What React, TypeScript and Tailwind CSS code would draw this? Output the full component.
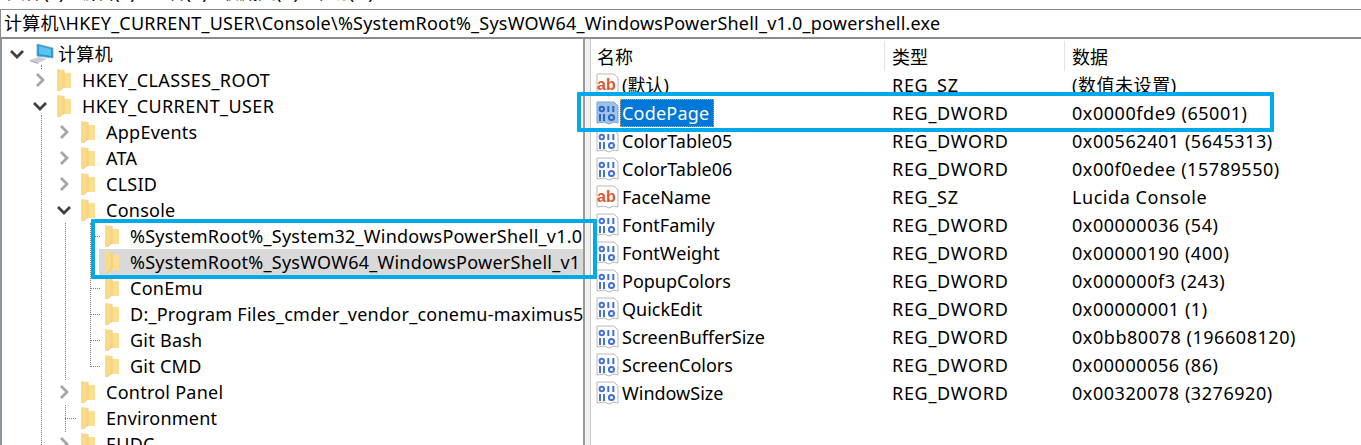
const font = { fontFamily: '"Noto Sans", "Noto Sans CJK SC", sans-serif' };

function Chevron({ open, dark }: { open?: boolean; dark?: boolean }) {
  return (
    <svg width="16" height="16" viewBox="0 0 16 16" fill="none" stroke={dark ? "#404040" : "#a6a6a6"} strokeWidth="2.8">
      {open ? <path d="M2 5l6 6 6-6" /> : <path d="M5 2l6 6-6 6" />}
    </svg>
  );
}

function Folder() {
  return (
    <svg width="16" height="26" viewBox="0 0 16 26" className="shrink-0">
      <path d="M6 6h8v15H6z" fill="#fbdf8e" />
      <path d="M0 2l7 1v17l-5 4H0z" fill="#f8da8a" />
      <path d="M7 3v17l-5 4" fill="none" stroke="#f1c96b" />
    </svg>
  );
}

function Computer() {
  return (
    <svg width="24" height="22" viewBox="0 0 24 22" className="shrink-0">
      <path d="M7 1l16 4v10L7 13z" fill="#1e9ad6" stroke="#8aa4b8" strokeWidth="0.8" />
      <path d="M9 3l12 3v7L9 11z" fill="#5cc3ef" />
      <path d="M0 17l9-3 8 2-9 4z" fill="#c9ced3" />
      <path d="M0 17l8 3v1l-8-3z" fill="#8f979e" />
    </svg>
  );
}

function RegIcon({ type, dim }: { type: "sz" | "dword"; dim?: boolean }) {
  return (
    <svg width="23" height="24" viewBox="0 0 23 24" className="shrink-0">
      <path d="M1 1h17l4 4v17l-4-1-5 2-5-2-7 1z" fill={dim ? "#9dc3ea" : "#fff"} stroke={dim ? "#7aa5d8" : "#b9b9b9"} />
      {type === "sz" ? (
        <text x="1" y="17" fontSize="16" fontWeight="700" fill="#dd5a32" fontFamily="Liberation Sans">ab</text>
      ) : (
        <g fill="none" stroke={dim ? "#2a66c4" : "#4272d8"} strokeWidth="2">
          <circle cx="5.8" cy="8" r="2.2" />
          <path d="M12.3 5v6M17.3 5v6M4 13v7M8 13v7" />
          <circle cx="15.5" cy="16.5" r="2.6" />
        </g>
      )}
    </svg>
  );
}

type TreeRow = { label: string; indent: number; chevron?: "open" | "closed"; selected?: boolean };

const tree: TreeRow[] = [
  { label: "HKEY_CLASSES_ROOT", indent: 1, chevron: "closed" },
  { label: "HKEY_CURRENT_USER", indent: 1, chevron: "open" },
  { label: "AppEvents", indent: 2, chevron: "closed" },
  { label: "ATA", indent: 2, chevron: "closed" },
  { label: "CLSID", indent: 2, chevron: "closed" },
  { label: "Console", indent: 2, chevron: "open" },
  { label: "%SystemRoot%_System32_WindowsPowerShell_v1.0", indent: 3 },
  { label: "%SystemRoot%_SysWOW64_WindowsPowerShell_v1", indent: 3, selected: true },
  { label: "ConEmu", indent: 3 },
  { label: "D:_Program Files_cmder_vendor_conemu-maximus5_", indent: 3 },
  { label: "Git Bash", indent: 3 },
  { label: "Git CMD", indent: 3 },
  { label: "Control Panel", indent: 2, chevron: "closed" },
  { label: "Environment", indent: 2 },
  { label: "EUDC", indent: 2, chevron: "closed" },
];

const values = [
  { name: "(默认)", type: "REG_SZ", data: "(数值未设置)", icon: "sz" as const },
  { name: "CodePage", type: "REG_DWORD", data: "0x0000fde9 (65001)", icon: "dword" as const, selected: true },
  { name: "ColorTable05", type: "REG_DWORD", data: "0x00562401 (5645313)", icon: "dword" as const },
  { name: "ColorTable06", type: "REG_DWORD", data: "0x00f0edee (15789550)", icon: "dword" as const },
  { name: "FaceName", type: "REG_SZ", data: "Lucida Console", icon: "sz" as const },
  { name: "FontFamily", type: "REG_DWORD", data: "0x00000036 (54)", icon: "dword" as const },
  { name: "FontWeight", type: "REG_DWORD", data: "0x00000190 (400)", icon: "dword" as const },
  { name: "PopupColors", type: "REG_DWORD", data: "0x000000f3 (243)", icon: "dword" as const },
  { name: "QuickEdit", type: "REG_DWORD", data: "0x00000001 (1)", icon: "dword" as const },
  { name: "ScreenBufferSize", type: "REG_DWORD", data: "0x0bb80078 (196608120)", icon: "dword" as const },
  { name: "ScreenColors", type: "REG_DWORD", data: "0x00000056 (86)", icon: "dword" as const },
  { name: "WindowSize", type: "REG_DWORD", data: "0x00320078 (3276920)", icon: "dword" as const },
];

export default function App() {
  return (
    <div className="relative h-[445px] w-[1361px] overflow-hidden bg-white text-[18px] text-black" style={font}>
      {/* 菜单栏 */}
      <div className="flex h-[9px] items-end gap-[13px] overflow-hidden pb-[4px] pl-[7px] leading-[26px] tracking-[0.3px]">
        <span className="shrink-0">文件(F)</span>
        <span className="shrink-0">编辑(E)</span>
        <span className="shrink-0">查看(V)</span>
        <span className="shrink-0">收藏夹(A)</span>
        <span className="shrink-0">帮助(H)</span>
      </div>

      {/* 地址栏 */}
      <div className="flex h-[30px] items-center border-y border-b-[2px] border-l border-[#8c8c8c] pl-[3px] tracking-[0.22px]">
        计算机\HKEY_CURRENT_USER\Console\%SystemRoot%_SysWOW64_WindowsPowerShell_v1.0_powershell.exe
      </div>

      <div className="flex h-[406px]">
        {/* 左侧树 */}
        <div className="w-[583px] shrink-0 overflow-hidden border-l-[2px] border-[#8d949c] pl-[7px] pt-[2px] tracking-[0.25px]">
          <div className="flex h-[26px] items-center gap-[5px]">
            <Chevron open dark />
            <Computer />
            <span className="-ml-[1px]">计算机</span>
          </div>
          {tree.map((row) => (
            <div key={row.label} className="flex h-[26px] items-center">
              <div className={row.indent === 1 ? "w-[24px] shrink-0" : row.indent === 2 ? "w-[48px] shrink-0" : "w-[72px] shrink-0"} />
              <div className={row.selected ? "-ml-[1px] flex w-[19px] shrink-0 items-center" : "-ml-[1px] flex w-[25px] shrink-0 items-center"}>
                {row.chevron === "open" && <Chevron open dark />}
                {row.chevron === "closed" && <Chevron />}
              </div>
              <div className={row.selected ? "flex h-[26px] flex-1 items-center bg-[#d9d9d9] pl-[6px]" : "flex items-center"}>
                <Folder />
                <span className={row.indent === 1 ? "ml-[9px] whitespace-nowrap tracking-[0.4px]" : "ml-[9px] whitespace-nowrap"}>{row.label}</span>
              </div>
            </div>
          ))}
        </div>

        {/* 分隔条 */}
        <div className="w-[8px] shrink-0 border-l-[2px] border-r border-l-[#9a9a9a] border-r-[#c8c8c8] bg-[#f0f0f0]" />

        {/* 右侧列表 */}
        <div className="min-w-0 flex-1">
          <div className="flex h-[32px] items-start pt-[2px]">
            <span className="flex h-[30px] w-[294px] items-center border-r border-[#e5e5e5] pl-[6px] pt-[2px]">名称</span>
            <span className="flex h-[30px] w-[180px] items-center border-r border-[#e5e5e5] pl-[7px] pt-[2px]">类型</span>
            <span className="flex h-[30px] items-center pl-[7px] pt-[2px]">数据</span>
          </div>
          {values.map((v) => (
            <div key={v.name} className="flex h-[28px] items-center pl-[5px]">
              <div className="flex w-[296px] shrink-0 items-center">
                <RegIcon type={v.icon} dim={v.selected} />
                <span
                  className={
                    v.selected
                      ? "ml-[1px] flex h-[28px] items-center border border-dotted border-[#f39c3d] bg-[#0078d7] pl-[1px] pr-[4px] tracking-[0.2px] text-white"
                      : "pl-[3px]"
                  }
                >
                  {v.name}
                </span>
              </div>
              <span className="w-[180px] shrink-0 tracking-[0.7px]">{v.type}</span>
              <span className="tracking-[0.55px]">{v.data}</span>
            </div>
          ))}
        </div>
      </div>

      {/* 树形连接线 */}
      <div className="absolute left-[41px] top-[115px] h-[330px] border-l border-dotted border-[#808080]" />
      <div className="absolute left-[41px] top-[65px] h-[4px] border-l border-dotted border-[#808080]" />
      <div className="absolute left-[65px] top-[223px] h-[157px] border-l border-dotted border-[#808080]" />
      <div className="absolute left-[65px] top-[405px] h-[27px] border-l border-dotted border-[#808080]" />
      <div className="absolute left-[65px] top-[418px] w-[11px] border-t border-dotted border-[#808080]" />
      <div className="absolute left-[90px] top-[223px] h-[144px] border-l border-dotted border-[#808080]" />
      <div className="absolute left-[90px] top-[236px] w-[10px] border-t border-dotted border-[#808080]" />
      <div className="absolute left-[90px] top-[288px] w-[10px] border-t border-dotted border-[#808080]" />
      <div className="absolute left-[90px] top-[314px] w-[10px] border-t border-dotted border-[#808080]" />
      <div className="absolute left-[90px] top-[340px] w-[10px] border-t border-dotted border-[#808080]" />
      <div className="absolute left-[90px] top-[366px] w-[10px] border-t border-dotted border-[#808080]" />

      {/* 标注框 */}
      <div className="absolute left-[577px] top-[92px] h-[40px] w-[697px] rounded-[1px] border-[4px] border-[#00a9ea]" />
      <div className="absolute left-[91px] top-[219px] h-[60px] w-[506px] rounded-[1px] border-[4px] border-[#00a9ea]" />
    </div>
  );
}
